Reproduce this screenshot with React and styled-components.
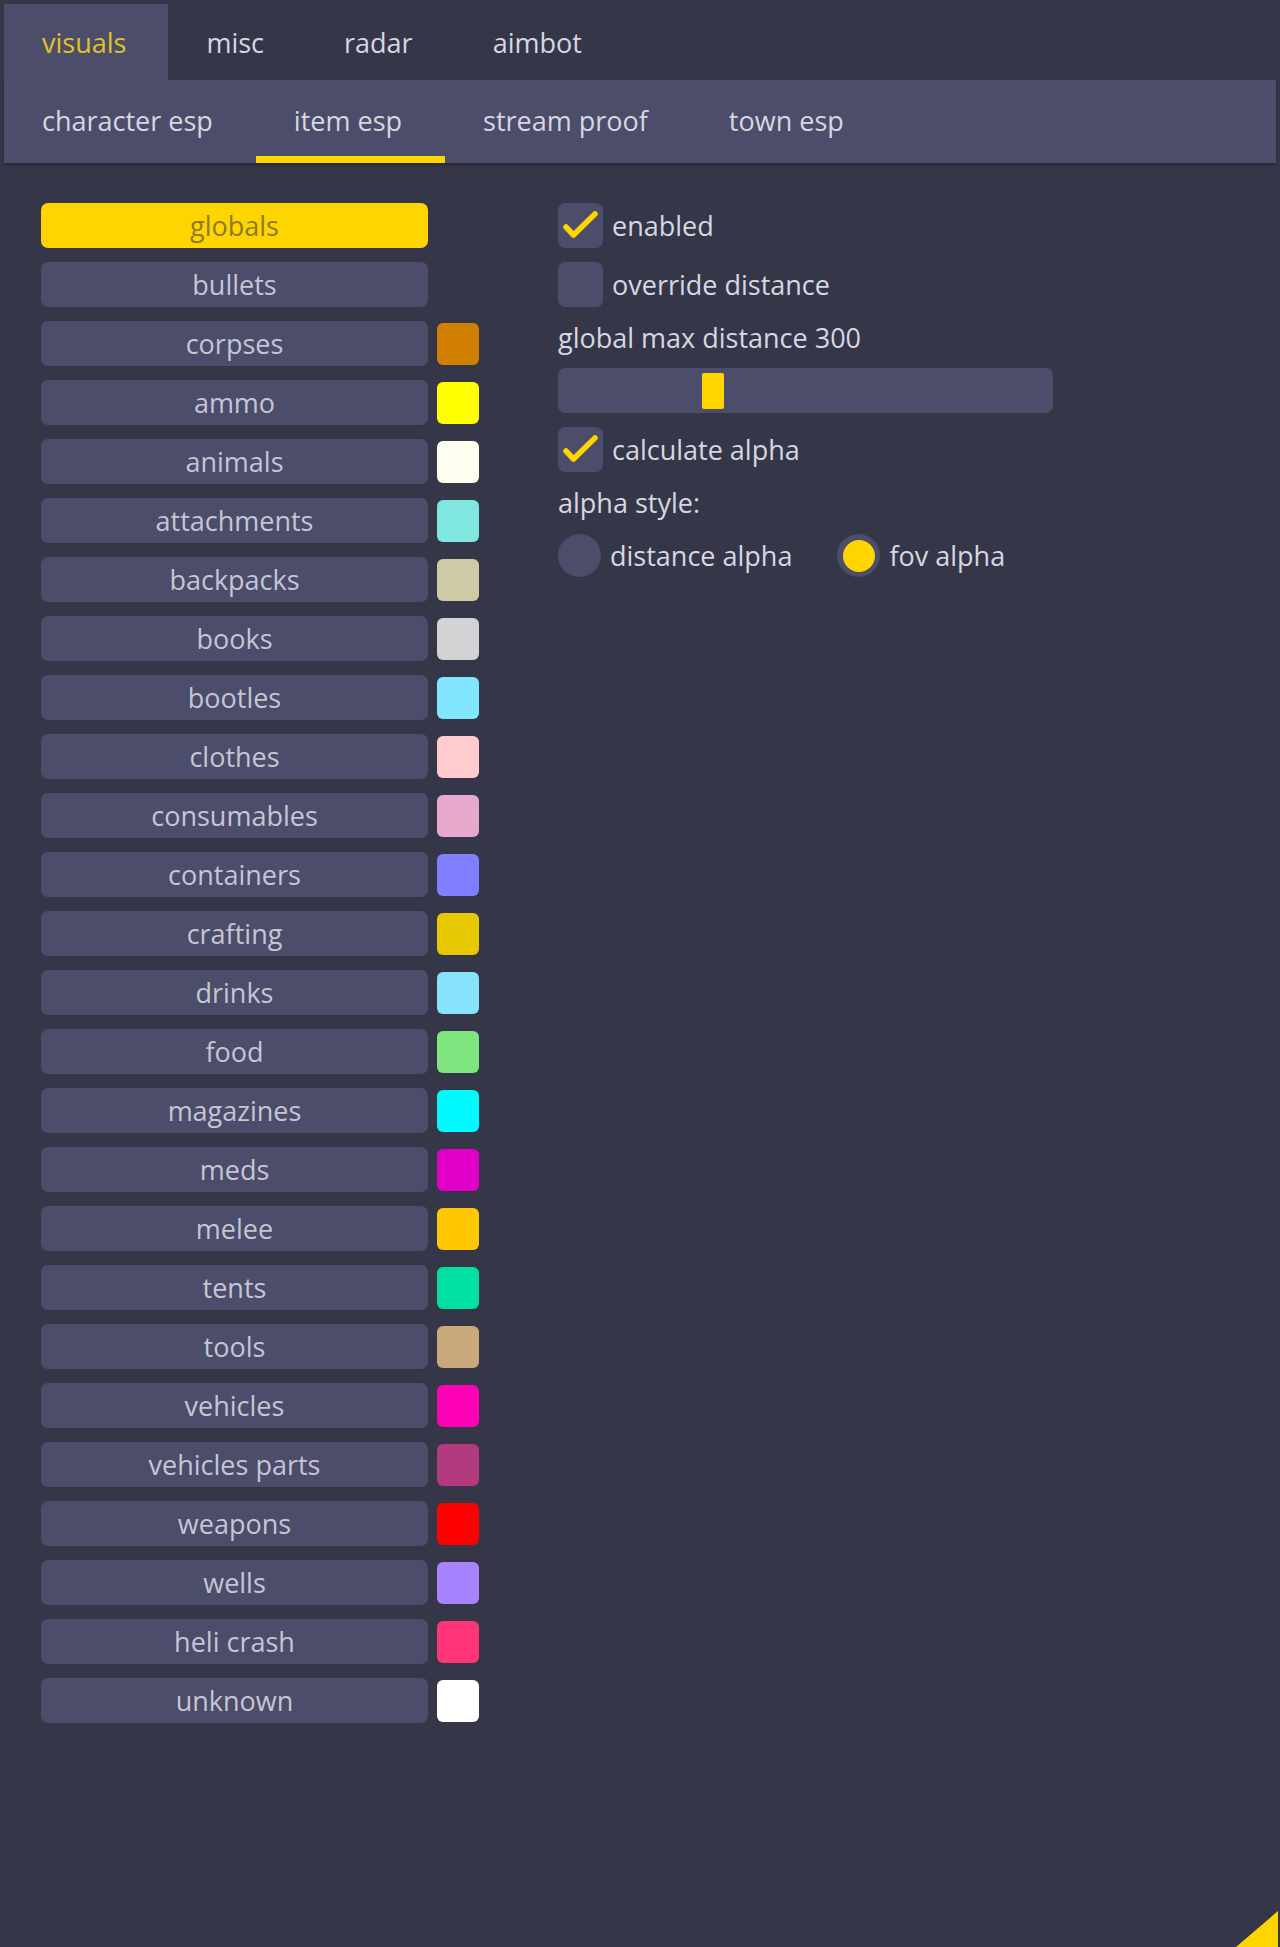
import React from "react";
import styled, { createGlobalStyle } from "styled-components";

const BG = "#353749";
const PANEL = "#4b4d6a";
const YELLOW = "#ffd500";
const TEXT = "#d6d7e1";

const GlobalStyle = createGlobalStyle`
  html, body {
    margin: 0;
    padding: 0;
    background: ${BG};
  }
  body {
    font-family: "Open Sans", "Noto Sans", sans-serif;
    font-size: 27px;
    color: ${TEXT};
  }
`;

const mainTabs = ["visuals", "misc", "radar", "aimbot"];
const subTabs = ["character esp", "item esp", "stream proof", "town esp"];

const items = [
  ["globals", null],
  ["bullets", null],
  ["corpses", "#d17f00"],
  ["ammo", "#ffff00"],
  ["animals", "#fffff0"],
  ["attachments", "#7fe6e0"],
  ["backpacks", "#cfcaa6"],
  ["books", "#d3d3d6"],
  ["bootles", "#83e6ff"],
  ["clothes", "#ffcbce"],
  ["consumables", "#e6a9cc"],
  ["containers", "#807fff"],
  ["crafting", "#e6c800"],
  ["drinks", "#86e3fb"],
  ["food", "#7fe67f"],
  ["magazines", "#00fbff"],
  ["meds", "#e000c8"],
  ["melee", "#ffc800"],
  ["tents", "#00e0a0"],
  ["tools", "#c9a87b"],
  ["vehicles", "#ff00b4"],
  ["vehicles parts", "#b23a7e"],
  ["weapons", "#ff0000"],
  ["wells", "#a883ff"],
  ["heli crash", "#ff3577"],
  ["unknown", "#ffffff"],
];

//------------------------------------------------------------------------------
const Window = styled.div`
  position: relative;
  box-sizing: border-box;
  min-height: 1947px;
  padding: 4px 4px 0;
  background: ${BG};
`;

const TopBar = styled.div`
  display: flex;
  height: 76px;
`;

const TopTab = styled.div`
  display: flex;
  align-items: center;
  padding: 0 42px 0 38px;
  background: ${(p) => (p.$active ? PANEL : "transparent")};
  color: ${(p) => (p.$active ? "#e2c324" : TEXT)};
`;

const SubBar = styled.div`
  display: flex;
  height: 83px;
  background: ${PANEL};
  box-shadow: 0 2px 3px rgba(20, 20, 35, 0.45);
`;

const SubTab = styled.div`
  box-sizing: border-box;
  display: flex;
  align-items: center;
  padding: 4px 43px 0 38px;
  border-bottom: 7px solid ${(p) => (p.$active ? YELLOW : "transparent")};
`;

const Content = styled.div`
  display: grid;
  grid-template-columns: 438px 1fr;
  column-gap: 79px;
  padding: 40px 0 0 37px;
`;

//! item list
const List = styled.div`
  display: flex;
  flex-direction: column;
  gap: 14px;
`;

const ItemRow = styled.div`
  display: flex;
  align-items: center;
  gap: 9px;
`;

const ItemButton = styled.div`
  width: 387px;
  height: 45px;
  border-radius: 7px;
  display: flex;
  align-items: center;
  justify-content: center;
  background: ${(p) => (p.$active ? YELLOW : PANEL)};
  color: ${(p) => (p.$active ? "#8c7b22" : "#c4c6d6")};
`;

const Swatch = styled.div`
  width: 42px;
  height: 42px;
  border-radius: 6px;
  background: ${(p) => p.$color};
`;

//! options
const Options = styled.div`
  display: flex;
  flex-direction: column;
  gap: 14px;
`;

const CheckRow = styled.div`
  display: flex;
  align-items: center;
  gap: 9px;
  height: 45px;
`;

const Box = styled.div`
  width: 45px;
  height: 45px;
  border-radius: 7px;
  background: ${PANEL};
  display: flex;
  align-items: center;
  justify-content: center;
`;

const TextLine = styled.div`
  height: 33px;
  line-height: 33px;
`;

const Slider = styled.div`
  position: relative;
  width: 495px;
  height: 45px;
  border-radius: 7px;
  background: ${PANEL};
`;

const Thumb = styled.div`
  position: absolute;
  top: 5px;
  width: 22px;
  height: 36px;
  border-radius: 2px;
  background: ${YELLOW};
`;

const RadioGroup = styled.div`
  display: flex;
  align-items: center;
  gap: 45px;
  height: 45px;
`;

const Radio = styled.div`
  display: flex;
  align-items: center;
  gap: 9px;
`;

const Circle = styled.div`
  width: 43px;
  height: 43px;
  border-radius: 50%;
  background: ${PANEL};
  display: flex;
  align-items: center;
  justify-content: center;
  &::after {
    content: "";
    width: 32px;
    height: 32px;
    border-radius: 50%;
    background: ${(p) => (p.$on ? YELLOW : "transparent")};
  }
`;

const Grip = styled.svg`
  position: absolute;
  right: 2px;
  bottom: 0;
`;

const Check = () => (
  <svg width="45" height="45" viewBox="0 0 45 45">
    <polyline
      points="8,24 15.5,32 37,11"
      fill="none"
      stroke={YELLOW}
      strokeWidth="5.5"
      strokeLinecap="round"
      strokeLinejoin="round"
    />
  </svg>
);

const Checkbox = ({ checked, label }) => (
  <CheckRow>
    <Box>{checked && <Check />}</Box>
    <span>{label}</span>
  </CheckRow>
);

export default function App() {
  const distance = 300;
  const max = 1000;
  const thumbLeft = 5 + (distance / max) * (495 - 10 - 22);

  return (
    <>
      <GlobalStyle />
      <Window>
        <TopBar>
          {mainTabs.map((t, i) => (
            <TopTab key={t} $active={i === 0}>
              {t}
            </TopTab>
          ))}
        </TopBar>
        <SubBar>
          {subTabs.map((t, i) => (
            <SubTab key={t} $active={i === 1}>
              {t}
            </SubTab>
          ))}
        </SubBar>

        <Content>
          <List>
            {items.map(([name, color], i) => (
              <ItemRow key={name}>
                <ItemButton $active={i === 0}>{name}</ItemButton>
                {color && <Swatch $color={color} />}
              </ItemRow>
            ))}
          </List>

          <Options>
            <Checkbox checked label="enabled" />
            <Checkbox label="override distance" />
            <TextLine>global max distance {distance}</TextLine>
            <Slider>
              <Thumb style={{ left: thumbLeft }} />
            </Slider>
            <Checkbox checked label="calculate alpha" />
            <TextLine>alpha style:</TextLine>
            <RadioGroup>
              <Radio>
                <Circle />
                <span>distance alpha</span>
              </Radio>
              <Radio>
                <Circle $on />
                <span>fov alpha</span>
              </Radio>
            </RadioGroup>
          </Options>
        </Content>

        <Grip width="42" height="36" viewBox="0 0 42 36">
          <polygon points="0,36 42,36 42,0" fill={YELLOW} />
        </Grip>
      </Window>
    </>
  );
}
